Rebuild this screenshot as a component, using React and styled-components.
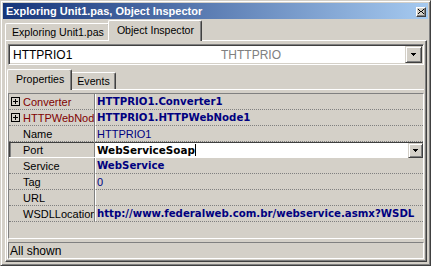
import React from 'react';
import styled, { createGlobalStyle } from 'styled-components';

const GlobalStyle = createGlobalStyle`
  html, body {
    margin: 0;
    padding: 0;
    background: #d4d0c8;
  }
  body {
    font-family: "Liberation Sans", Arial, sans-serif;
    font-size: 11px;
    color: #000;
  }
`;

const properties = [
  { name: 'Converter', value: 'HTTPRIO1.Converter1', expandable: true, bold: true },
  { name: 'HTTPWebNode', value: 'HTTPRIO1.HTTPWebNode1', expandable: true, bold: true },
  { name: 'Name', value: 'HTTPRIO1' },
  { name: 'Port', value: 'WebServiceSoap', editing: true },
  { name: 'Service', value: 'WebService', bold: true },
  { name: 'Tag', value: '0' },
  { name: 'URL', value: '' },
  { name: 'WSDLLocation', value: 'http://www.federalweb.com.br/webservice.asmx?WSDL', bold: true },
];

const DownArrow = () => (
  <svg width="5" height="3" viewBox="0 0 5 3" shapeRendering="crispEdges">
    <rect x="0" y="0" width="5" height="1" fill="#000" />
    <rect x="1" y="1" width="3" height="1" fill="#000" />
    <rect x="2" y="2" width="1" height="1" fill="#000" />
  </svg>
);

const PlusBox = () => (
  <svg width="9" height="9" viewBox="0 0 9 9" shapeRendering="crispEdges">
    <rect x="0.5" y="0.5" width="8" height="8" fill="none" stroke="#000" />
    <rect x="2" y="4" width="5" height="1" fill="#000" />
    <rect x="4" y="2" width="1" height="5" fill="#000" />
  </svg>
);

export default function App() {
  return (
    <>
      <GlobalStyle />
      <Window>
        <TitleBar>
          <Caption>Exploring Unit1.pas, Object Inspector</Caption>
          <CloseButton>
            <svg width="6" height="5" viewBox="0 0 6 5" shapeRendering="crispEdges">
              <path d="M0 0h1v1H0zM5 0h1v1H5zM1 1h1v1H1zM4 1h1v1H4zM2 2h2v1H2zM1 3h1v1H1zM4 3h1v1H4zM0 4h1v1H0zM5 4h1v1H5z" fill="#000" />
            </svg>
          </CloseButton>
        </TitleBar>

        <TabStrip $indent={2}>
          <Tab>Exploring Unit1.pas</Tab>
          <Tab $active>Object Inspector</Tab>
        </TabStrip>

        <Page>
          <Combo>
            <ComboText>HTTPRIO1</ComboText>
            <ComboClass>THTTPRIO</ComboClass>
            <DropButton><DownArrow /></DropButton>
          </Combo>

          <TabStrip $indent={2} $top={3}>
            <Tab $active>Properties</Tab>
            <Tab>Events</Tab>
          </TabStrip>

          <InnerPage>
            <Grid>
              {properties.map((p) => (
                <Row key={p.name} $selected={p.editing}>
                  <NameCell $selected={p.editing} $expandable={p.expandable}>
                    <Slot>{p.expandable && <PlusBox />}</Slot>
                    <NameText>{p.name}</NameText>
                  </NameCell>
                  {p.editing ? (
                    <EditCell>
                      <EditText>{p.value}</EditText>
                      <Caret />
                      <RowDropButton><DownArrow /></RowDropButton>
                    </EditCell>
                  ) : (
                    <ValueCell $bold={p.bold}>{p.value}</ValueCell>
                  )}
                </Row>
              ))}
            </Grid>
            <StatusBar>All shown</StatusBar>
          </InnerPage>
        </Page>
      </Window>
    </>
  );
}

// Outer window frame
const Window = styled.div`
  width: 431px;
  height: 266px;
  box-sizing: border-box;
  border: 1px solid;
  border-color: #d4d0c8 #404040 #404040 #d4d0c8;
  box-shadow: inset 1px 1px #fff, inset -1px -1px #808080;
  padding: 2px;
  display: flex;
  flex-direction: column;
  overflow: hidden;
`;

const TitleBar = styled.div`
  height: 16px;
  flex: none;
  display: flex;
  align-items: center;
  justify-content: space-between;
  padding: 0 2px 0 3px;
  background: linear-gradient(to right, #16357a, #a6caf0);
`;

const Caption = styled.span`
  color: #fff;
  font-weight: bold;
  font-size: 11px;
  white-space: nowrap;
`;

const CloseButton = styled.div`
  width: 10px;
  height: 10px;
  box-sizing: border-box;
  background: #d4d0c8;
  border: 1px solid;
  border-color: #fff #404040 #404040 #fff;
  box-shadow: inset -1px -1px #808080;
  display: flex;
  align-items: center;
  justify-content: center;
  margin-top: 1px;
`;

// Tabs
const TabStrip = styled.div`
  height: 21px;
  flex: none;
  display: flex;
  align-items: flex-end;
  padding-left: ${(p) => p.$indent}px;
  margin-top: ${(p) => p.$top || 0}px;
  position: relative;
  z-index: 1;
`;

const Tab = styled.div`
  box-sizing: border-box;
  height: ${(p) => (p.$active ? 21 : 17)}px;
  margin: 0 ${(p) => (p.$active ? -2 : 0)}px ${(p) => (p.$active ? -1 : 0)}px;
  padding: ${(p) => (p.$active ? '3px 7px 0 8px' : '2px 5px 0 6px')};
  background: #d4d0c8;
  border-top: 1px solid #fff;
  border-left: 1px solid #fff;
  border-right: 1px solid #404040;
  box-shadow: inset -1px 0 #808080;
  border-radius: 2px 2px 0 0;
  font-size: 10.6px;
  line-height: 13px;
  white-space: nowrap;
  position: relative;
  z-index: ${(p) => (p.$active ? 2 : 1)};
`;

const Page = styled.div`
  flex: 1;
  margin: 0 1px 1px 2px;
  box-sizing: border-box;
  border: 1px solid;
  border-color: #fff #404040 #404040 #fff;
  box-shadow: inset -1px -1px #808080;
  padding: 3px 2px 2px 1px;
  display: flex;
  flex-direction: column;
  min-height: 0;
`;

// Component selector combo
const Combo = styled.div`
  height: 21px;
  flex: none;
  box-sizing: border-box;
  margin-left: 1px;
  background: #fff;
  border: 1px solid;
  border-color: #808080 #fff #fff #808080;
  box-shadow: inset 1px 1px #404040, inset -1px -1px #d4d0c8;
  padding: 1px;
  display: flex;
  align-items: center;
`;

const ComboText = styled.span`
  width: 208px;
  padding-left: 3px;
  font-size: 12px;
`;

const ComboClass = styled.span`
  flex: 1;
  color: #808080;
  font-size: 12px;
`;

const DropButton = styled.div`
  width: 17px;
  height: 17px;
  box-sizing: border-box;
  background: #d4d0c8;
  border: 1px solid;
  border-color: #d4d0c8 #404040 #404040 #d4d0c8;
  box-shadow: inset 1px 1px #fff, inset -1px -1px #808080;
  display: flex;
  align-items: center;
  justify-content: center;
`;

const InnerPage = styled.div`
  flex: 1;
  min-height: 0;
  border-top: 1px solid #fff;
  border-left: 1px solid #fff;
  padding-top: 3px;
  display: flex;
  flex-direction: column;
`;

// Property grid
const Grid = styled.div`
  flex: 1;
  box-sizing: border-box;
  border: 1px solid;
  border-color: #808080 #fff #fff #808080;
  overflow: hidden;
`;

const Row = styled.div`
  height: 16px;
  box-sizing: border-box;
  display: flex;
  border-bottom: 1px ${(p) => (p.$selected ? 'solid #fff' : 'dotted #808080')};
  box-shadow: ${(p) => (p.$selected ? 'inset 0 1px #404040' : 'none')};
`;

const NameCell = styled.div`
  width: 86px;
  flex: none;
  box-sizing: border-box;
  display: flex;
  align-items: center;
  padding-left: 2px;
  border-right: 1px solid #808080;
  overflow: hidden;
  color: ${(p) => (p.$expandable ? '#800000' : '#000')};
  box-shadow: ${(p) => (p.$selected ? 'inset 1px 1px #404040, inset 2px 0 #808080' : 'none')};
`;

const Slot = styled.span`
  width: 12px;
  flex: none;
  display: flex;
  align-items: center;
`;

const NameText = styled.span`
  white-space: nowrap;
  font-size: 11px;
`;

const ValueCell = styled.div`
  flex: 1;
  border-left: 1px solid #fff;
  padding-left: 1px;
  display: flex;
  align-items: center;
  white-space: nowrap;
  overflow: hidden;
  color: #000080;
  font-family: ${(p) => (p.$bold ? '"DejaVu Sans", Verdana, sans-serif' : '"Liberation Sans", Arial, sans-serif')};
  font-weight: ${(p) => (p.$bold ? 'bold' : 'normal')};
  font-size: ${(p) => (p.$bold ? '10.2px' : '11px')};
`;

const EditCell = styled.div`
  flex: 1;
  display: flex;
  align-items: center;
  background: #fff;
  padding-left: 2px;
  margin-top: 1px;
`;

const EditText = styled.span`
  font-family: "DejaVu Sans", Verdana, sans-serif;
  font-weight: bold;
  font-size: 10.4px;
  color: #000;
`;

const Caret = styled.span`
  width: 1px;
  height: 12px;
  background: #000;
`;

const RowDropButton = styled(DropButton)`
  width: 15px;
  height: 15px;
  margin-left: auto;
`;

const StatusBar = styled.div`
  height: 17px;
  flex: none;
  box-sizing: border-box;
  margin-top: 3px;
  border: 1px solid;
  border-color: #808080 #fff #fff #808080;
  padding-left: 1px;
  display: flex;
  align-items: center;
  font-size: 12px;
`;
